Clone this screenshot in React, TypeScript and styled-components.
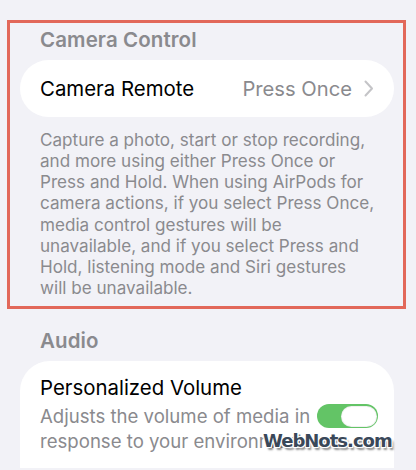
import React from "react";
import styled, { createGlobalStyle } from "styled-components";

const GlobalStyle = createGlobalStyle`
  html, body {
    margin: 0;
    padding: 0;
    background: #f2f2f7;
  }
  body {
    font-family: Inter, "Noto Sans", sans-serif;
    -webkit-font-smoothing: antialiased;
  }
`;

const Page = styled.div`
  position: relative;
  width: 416px;
  height: 470px;
  overflow: hidden;
  box-sizing: border-box;
  padding: 20px 22px 0 20px;
  background: #f2f2f7;
`;

const Highlight = styled.section`
  margin: 0 -12px 0 -13px;
  padding: 4px 9px 8px 10px;
  border: 3px solid #e2685a;
`;

const SectionTitle = styled.div<{ $top?: number }>`
  padding: ${(p) => p.$top ?? 0}px 0 0 20px;
  font-size: 20.5px;
  line-height: 25px;
  font-weight: 600;
  color: #8a8a8e;
  letter-spacing: 0.1px;
`;

const Card = styled.div<{ $tall?: boolean }>`
  margin-top: 8px;
  background: #ffffff;
  border-radius: ${(p) => (p.$tall ? "30px 30px 0 0" : "29px")};
  padding: ${(p) => (p.$tall ? "14px 16px 14px 20px" : "0 20px 0 20px")};
  height: ${(p) => (p.$tall ? "auto" : "57px")};
  box-sizing: border-box;
`;

const Row = styled.div`
  display: flex;
  align-items: center;
  height: 100%;
`;

const Label = styled.div`
  flex: 1;
  font-size: 20.4px;
  line-height: 25px;
  color: #000;
`;

const Value = styled.div`
  font-size: 20.2px;
  color: #8a8a8e;
  margin-right: 12px;
`;

const Chevron = styled.svg`
  width: 10px;
  height: 17px;
  display: block;
`;

const Footnote = styled.p`
  margin: 12px 0 0 20px;
  font-size: 17.1px;
  line-height: 21.15px;
  color: #8a8a8e;
`;

const ToggleRow = styled.div`
  display: flex;
  align-items: flex-start;
`;

const ToggleText = styled.div`
  flex: 1;
`;

const Sub = styled.div`
  margin-top: 4px;
  font-size: 18.6px;
  line-height: 25px;
  color: #8a8a8e;
`;

const Switch = styled.div`
  margin-top: 29px;
  width: 61px;
  height: 24px;
  border-radius: 12px;
  background: #63c466;
  display: flex;
  justify-content: flex-end;
  align-items: center;
  padding: 1.5px;
  box-sizing: border-box;
`;

const Knob = styled.div`
  width: 36px;
  height: 21px;
  border-radius: 11px;
  background: #fff;
  box-shadow: inset 0 0 0 1px rgba(0, 0, 0, 0.06);
`;

const Watermark = styled.div`
  position: absolute;
  left: 263px;
  top: 430px;
  font-family: "DejaVu Sans", Verdana, sans-serif;
  font-weight: 700;
  font-size: 18px;
  color: #3a4859;
  letter-spacing: -1px;
  text-shadow:
    -1px -1px 0 #fff, 1px -1px 0 #fff, -1px 1px 0 #fff, 1px 1px 0 #fff,
    2px 3px 2px rgba(0, 0, 0, 0.45);
`;

const App = () => {
  return (
    <>
      <GlobalStyle />
      <Page>
        <Highlight>
          <SectionTitle $top={0}>Camera Control</SectionTitle>
          <Card>
            <Row>
              <Label>Camera Remote</Label>
              <Value>Press Once</Value>
              <Chevron viewBox="0 0 10 17">
                <path
                  d="M1.5 1.5 L8 8.5 L1.5 15.5"
                  fill="none"
                  stroke="#c4c4c7"
                  strokeWidth="2"
                  strokeLinecap="round"
                  strokeLinejoin="round"
                />
              </Chevron>
            </Row>
          </Card>
          <Footnote>
            Capture a photo, start or stop recording,
            <br />
            and more using either Press Once or
            <br />
            Press and Hold. When using AirPods for
            <br />
            camera actions, if you select Press Once,
            <br />
            media control gestures will be
            <br />
            unavailable, and if you select Press and
            <br />
            Hold, listening mode and Siri gestures
            <br />
            will be unavailable.
          </Footnote>
        </Highlight>
        <SectionTitle $top={19}>Audio</SectionTitle>
        <Card $tall>
          <ToggleRow>
            <ToggleText>
              <Label>Personalized Volume</Label>
              <Sub>
                Adjusts the volume of media in
                <br />
                response to your environment.
              </Sub>
            </ToggleText>
            <Switch>
              <Knob />
            </Switch>
          </ToggleRow>
        </Card>
        <Watermark>WebNots.com</Watermark>
      </Page>
    </>
  );
};

export default App;
